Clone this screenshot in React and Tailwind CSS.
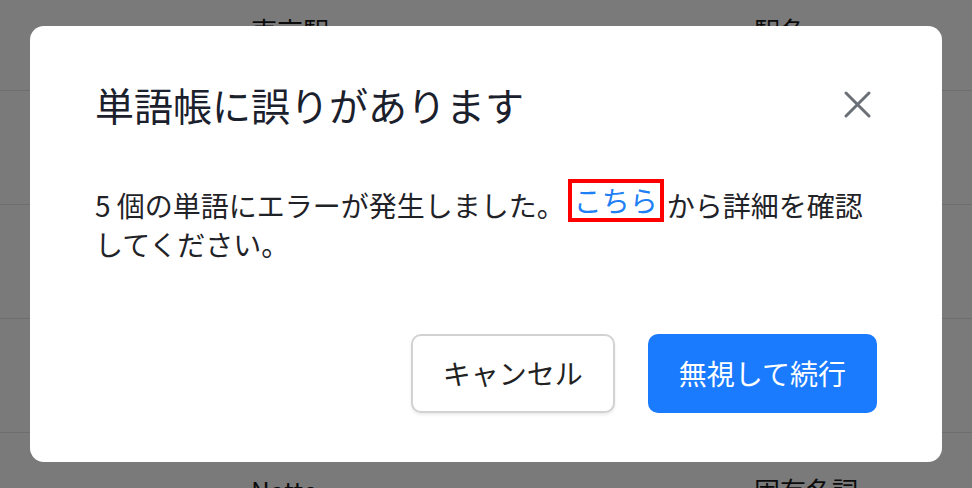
export default function App() {
  const font = { fontFamily: '"Noto Sans CJK JP", "Noto Sans", sans-serif' };
  return (
    <div
      className="relative w-[972px] h-[488px] overflow-hidden bg-[#7a7a7a] text-[#0c0c0c]"
      style={font}
    >
      {/* background table */}
      <div className="flex flex-col text-[26px] leading-[36px]">
        <div className="flex h-[91px] pt-[12px] border-b border-[#6e6e6e]">
          <div className="w-[754px] pl-[251px]">東京駅</div>
          <div>駅名</div>
        </div>
        <div className="flex items-center h-[114px] border-b border-[#6e6e6e]">
          <div className="w-[754px] pl-[251px]">Sushi</div>
          <div>名詞</div>
        </div>
        <div className="flex items-center h-[114px] border-b border-[#6e6e6e]">
          <div className="w-[754px] pl-[251px]">Ramen</div>
          <div>名詞</div>
        </div>
        <div className="flex items-center h-[114px] border-b border-[#6e6e6e]">
          <div className="w-[754px] pl-[251px]">Sake</div>
          <div>名詞</div>
        </div>
        <div className="flex items-center h-[114px]">
          <div className="w-[754px] pl-[251px]">Natto</div>
          <div>固有名詞</div>
        </div>
      </div>

      {/* modal */}
      <div className="absolute inset-0 flex items-center justify-center">
        <div className="w-[912px] h-[436px] bg-white rounded-[14px] flex flex-col px-[65px] pt-[52px]">
          <div className="flex items-center justify-between h-[52px]">
            <h2 className="text-[39px] leading-[52px] text-[#1a202c] font-normal">
              単語帳に誤りがあります
            </h2>
            <button className="w-[39px] h-[39px] flex items-center justify-center text-[#6b6f76]">
              <svg width="39" height="39" viewBox="0 0 39 39" fill="none">
                <path
                  d="M8 8 L31 31 M31 8 L8 31"
                  stroke="currentColor"
                  strokeWidth="3"
                  strokeLinecap="round"
                />
              </svg>
            </button>
          </div>
          <p className="mt-[56px] text-[28px] leading-[39px] text-[#1f2328]">
            5 個の単語にエラーが発生しました。
            <span className="inline-block mx-[3px] border-4 border-[#ff0000] px-[2px] leading-[35px] align-[5px] -mt-[7px] mb-[3px] text-[#1f7ff5]">
              こちら
            </span>
            から詳細を確認してください。
          </p>
          <div className="mt-[70px] flex justify-end gap-[33px]">
            <button className="h-[79px] px-[30px] rounded-[10px] border-2 border-[#d2d2d2] bg-white text-[28px] leading-[39px] text-[#222] shadow-[0_2px_3px_rgba(0,0,0,0.08)]">
              キャンセル
            </button>
            <button className="h-[79px] px-[31px] rounded-[10px] bg-[#1a7bff] text-[28px] leading-[39px] text-white">
              無視して続行
            </button>
          </div>
        </div>
      </div>
    </div>
  );
}
